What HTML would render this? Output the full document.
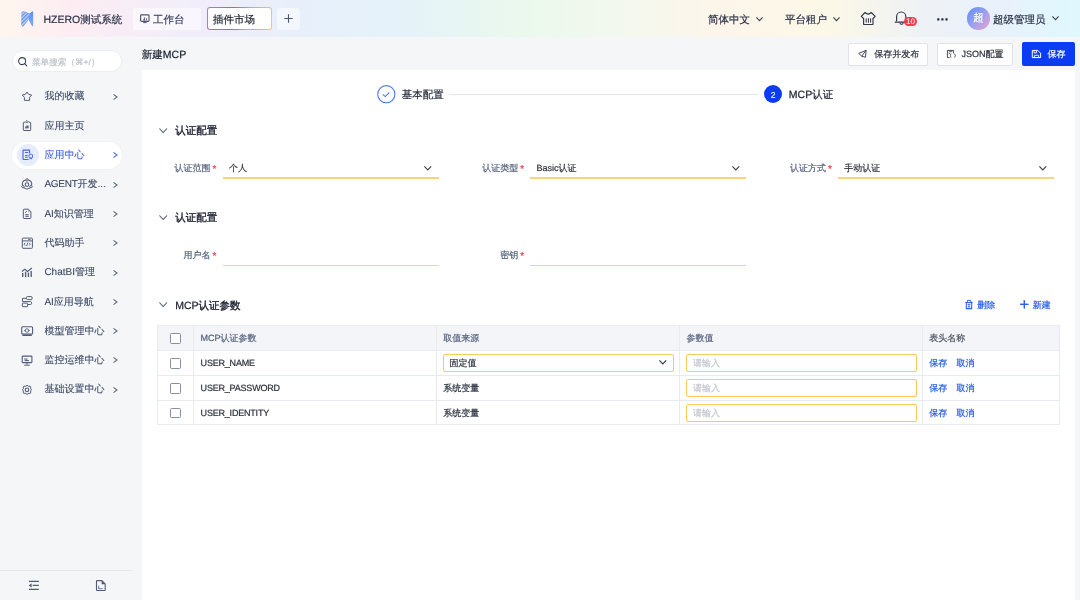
<!DOCTYPE html>
<html><head><meta charset="utf-8">
<style>
*{box-sizing:border-box;margin:0;padding:0}
html,body{width:1080px;height:600px;overflow:hidden}
body{text-rendering:geometricPrecision;-webkit-text-stroke:0.2px currentColor;position:relative;background:#f5f6f8;font-family:"Liberation Sans",sans-serif;color:#1f2533}
.a{position:absolute;white-space:nowrap}
svg.i{position:absolute;overflow:visible}
#hdr{left:0;top:0;width:1080px;height:37px;background:linear-gradient(90deg,#fff6ee 0px,#fdedf3 70px,#f1eefa 190px,#e7effb 300px,#e5f3f9 410px,#ebf9ec 530px,#f3f8ee 620px,#fdf5ea 720px,#fcf8e7 830px,#eff2f5 920px,#e8f1fc 1000px,#dff8fe 1080px)}
.h{font-size:10.5px;line-height:20px;color:#2a3247}
.menu{left:44.4px;font-size:10px;line-height:20px;color:#46506d;-webkit-text-stroke:0.1px currentColor}
.lbl{font-size:9px;line-height:20px;color:#56627e;text-align:right}
.req{color:#f0414f}
.inp{height:1.5px;background:#fdd27e}
.val{font-size:9px;line-height:20px;color:#2a303c}
.sec{font-size:10.5px;line-height:20px;color:#1d2230;font-weight:500;-webkit-text-stroke:0.35px currentColor}
.th{font-size:9px;line-height:20px;color:#56627e}
.td{font-size:9px;line-height:20px;color:#2a303c}
.link{font-size:9px;line-height:20px;color:#2257ee}
.cb{width:10.5px;height:10.5px;border:1px solid #858fa4;border-radius:1.5px;background:#fff}
.box{border:1px solid #fbc95c;border-radius:2px;background:#fff;height:17.8px}
.ph{font-size:9px;line-height:18px;color:#c3c7cf}
.vl{position:absolute;width:1px;background:#e8ebf0}
.hl{position:absolute;height:1px;background:#e8ebf0}
.lat{-webkit-text-stroke:0.25px currentColor}
</style></head><body><div id="wrap" style="position:absolute;left:0;top:0;width:1080px;height:600px;will-change:transform">
<div id="hdr" class="a"></div>
<svg class="i" style="left:0;top:0" width="1" height="1">
<defs><pattern id="strp" patternUnits="userSpaceOnUse" width="2.6" height="2.6" patternTransform="rotate(45)">
<rect width="2.6" height="2.6" fill="#c3d4f6"/><rect width="1.4" height="2.6" fill="#6c95ec"/></pattern>
<linearGradient id="lg1" x1="0" y1="0" x2="0" y2="1"><stop offset="0" stop-color="#5c93f7"/><stop offset="1" stop-color="#7aaaf8"/></linearGradient></defs>
<path d="M21.2 13.2 Q21.5 11.6 23.6 11.1 L29.6 13.2 L28.8 19.6 L23.2 26.8 Q21.4 26.4 21.2 24.8 Z" fill="url(#strp)"/>
<path d="M29.4 13.6 L32.4 11.2 Q33.2 11.2 33.2 12.2 L33.2 25.4 Q33 26.6 32 26.2 L28.6 19.6 Z" fill="url(#lg1)"/>
</svg>
<div class="a h" style="left:43.5px;top:9.50px">HZERO测试系统</div>
<div class="a" style="left:133px;top:7.5px;width:68px;height:22.5px;border-radius:3px;background:rgba(255,255,255,0.55)"></div>
<div class="a h" style="left:153px;top:9.50px;color:#3d4661">工作台</div>
<div class="a" style="left:207px;top:7px;width:65px;height:23px;border-radius:3px;background:linear-gradient(100deg,#e85fd3 0%,#9a6cf6 20%,#5a7ff8 40%,#52d0f5 62%,#f7a98c 82%,#f8c86f 100%)"></div>
<div class="a" style="left:208px;top:8px;width:63px;height:21px;border-radius:2.2px;background:#fff"></div>
<div class="a h" style="left:213px;top:9.50px;color:#1f2430">插件市场</div>
<div class="a" style="left:277px;top:7.5px;width:23px;height:22.5px;border-radius:3px;background:rgba(255,255,255,0.5)"></div>
<svg class="i" style="left:284px;top:14px" width="9" height="9"><path d="M4.5 0.3V8.7M0.3 4.5H8.7" stroke="#4a5572" stroke-width="1.1"/></svg>
<div class="a h" style="left:708px;top:9.50px">简体中文</div>
<svg class="i" style="left:756px;top:16.8px" width="7" height="4"><path d="M0.4 0.4 L3.5 3.6 L6.6 0.4" fill="none" stroke="#3a4255" stroke-width="1.1"/></svg>
<div class="a h" style="left:785px;top:9.50px">平台租户</div>
<svg class="i" style="left:832.5px;top:16.8px" width="7" height="4"><path d="M0.4 0.4 L3.5 3.6 L6.6 0.4" fill="none" stroke="#3a4255" stroke-width="1.1"/></svg>
<div class="a" style="left:904px;top:16.8px;width:13px;height:9.4px;border-radius:5px;background:#f03d4f;color:#fff;font-size:8px;line-height:9.4px;text-align:center;-webkit-text-stroke:0">10</div>
<svg class="i" style="left:936.5px;top:17.5px" width="11" height="3"><rect x="0.2" y="0.3" width="2.2" height="2.2" rx="0.5" fill="#22283a"/><rect x="4.3" y="0.3" width="2.2" height="2.2" rx="0.5" fill="#22283a"/><rect x="8.4" y="0.3" width="2.2" height="2.2" rx="0.5" fill="#22283a"/></svg>
<div class="a" style="left:967.3px;top:7.3px;width:22.6px;height:22.6px;border-radius:50%;background:linear-gradient(135deg,#5a8ff8 0%,#9c9ff0 50%,#eaa3d0 100%);color:#fff;font-size:10.5px;line-height:22.6px;text-align:center;font-weight:500;-webkit-text-stroke:0.15px #fff">超</div>
<div class="a h" style="left:993px;top:9.50px">超级管理员</div>
<svg class="i" style="left:1051.7px;top:16.4px" width="7" height="4"><path d="M0.4 0.4 L3.5 3.6 L6.6 0.4" fill="none" stroke="#3a4255" stroke-width="1.1"/></svg>
<div class="a" style="left:11.7px;top:50.4px;width:110.3px;height:22px;border-radius:11px;background:#fff;border:1px solid #eceef3"></div>
<svg class="i" style="left:17.5px;top:57.3px" width="10" height="10"><circle cx="4.1" cy="4.1" r="3.5" fill="none" stroke="#3a4152" stroke-width="1.05"/><path d="M6.7 6.7 L8.8 8.8" stroke="#3a4152" stroke-width="1.1" stroke-linecap="round"/></svg>
<div class="a" style="left:32px;top:52.20px;font-size:8.6px;line-height:20px;color:#bfc3cc">菜单搜索（⌘+/）</div>
<div class="a" style="left:12px;top:141.5px;width:110.2px;height:27px;border-radius:13.5px;background:#fff;box-shadow:0 0 0 0.6px #eef0f4"></div>
<div class="a" style="left:16.5px;top:143.7px;width:22.6px;height:22.6px;border-radius:50%;background:#e5edfd"></div>
<div class="a menu" style="top:87.45px;color:#3a4663">我的收藏</div>
<svg class="i" style="left:112.8px;top:93.75px" width="4.5" height="6"><path d="M0.5 0.4 L4 3 L0.5 5.6" fill="none" stroke="#5a6580" stroke-width="1.05"/></svg>
<div class="a menu" style="top:116.75px;color:#3a4663">应用主页</div>
<div class="a menu" style="top:146.05px;color:#3d59e8">应用中心</div>
<svg class="i" style="left:112.8px;top:152.35px" width="4.5" height="6"><path d="M0.5 0.4 L4 3 L0.5 5.6" fill="none" stroke="#4a64ec" stroke-width="1.05"/></svg>
<div class="a menu" style="top:175.35px;color:#3a4663"><span style="letter-spacing:-0.25px">AGENT</span>开发...</div>
<svg class="i" style="left:112.8px;top:181.65px" width="4.5" height="6"><path d="M0.5 0.4 L4 3 L0.5 5.6" fill="none" stroke="#5a6580" stroke-width="1.05"/></svg>
<div class="a menu" style="top:204.65px;color:#3a4663">AI知识管理</div>
<svg class="i" style="left:112.8px;top:210.95px" width="4.5" height="6"><path d="M0.5 0.4 L4 3 L0.5 5.6" fill="none" stroke="#5a6580" stroke-width="1.05"/></svg>
<div class="a menu" style="top:233.95px;color:#3a4663">代码助手</div>
<svg class="i" style="left:112.8px;top:240.25px" width="4.5" height="6"><path d="M0.5 0.4 L4 3 L0.5 5.6" fill="none" stroke="#5a6580" stroke-width="1.05"/></svg>
<div class="a menu" style="top:263.25px;color:#3a4663">ChatBI管理</div>
<svg class="i" style="left:112.8px;top:269.55px" width="4.5" height="6"><path d="M0.5 0.4 L4 3 L0.5 5.6" fill="none" stroke="#5a6580" stroke-width="1.05"/></svg>
<div class="a menu" style="top:292.55px;color:#3a4663">AI应用导航</div>
<svg class="i" style="left:112.8px;top:298.85px" width="4.5" height="6"><path d="M0.5 0.4 L4 3 L0.5 5.6" fill="none" stroke="#5a6580" stroke-width="1.05"/></svg>
<div class="a menu" style="top:321.85px;color:#3a4663">模型管理中心</div>
<svg class="i" style="left:112.8px;top:328.15px" width="4.5" height="6"><path d="M0.5 0.4 L4 3 L0.5 5.6" fill="none" stroke="#5a6580" stroke-width="1.05"/></svg>
<div class="a menu" style="top:351.15px;color:#3a4663">监控运维中心</div>
<svg class="i" style="left:112.8px;top:357.45px" width="4.5" height="6"><path d="M0.5 0.4 L4 3 L0.5 5.6" fill="none" stroke="#5a6580" stroke-width="1.05"/></svg>
<div class="a menu" style="top:380.45px;color:#3a4663">基础设置中心</div>
<svg class="i" style="left:112.8px;top:386.75px" width="4.5" height="6"><path d="M0.5 0.4 L4 3 L0.5 5.6" fill="none" stroke="#5a6580" stroke-width="1.05"/></svg>
<div class="a" style="left:0;top:570px;width:132px;height:1px;background:#e6e8ed"></div>
<div class="a" style="left:141.8px;top:44.60px;font-size:10.5px;line-height:20px;color:#1d2333;font-weight:500">新建<span class="lat">MCP</span></div>
<div class="a" style="left:848.4px;top:42.5px;width:79.5px;height:23px;border:1px solid #dfe2e8;border-radius:2px;background:#fff"></div>
<div class="a" style="left:874.2px;top:43.70px;font-size:9px;line-height:20px;color:#2a303c">保存并发布</div>
<div class="a" style="left:937px;top:42.5px;width:76px;height:23px;border:1px solid #dfe2e8;border-radius:2px;background:#fff"></div>
<div class="a" style="left:961.6px;top:43.70px;font-size:9px;line-height:20px;color:#2a303c">JSON配置</div>
<div class="a" style="left:1022.2px;top:42.2px;width:52.8px;height:23.4px;border-radius:2px;background:#0b3cf4"></div>
<div class="a" style="left:1047.6px;top:43.70px;font-size:9px;line-height:20px;color:#fff">保存</div>
<div class="a" style="left:141.8px;top:70.2px;width:933px;height:530px;background:#fff"></div>
<svg class="i" style="left:376.7px;top:85.1px" width="19" height="19"><circle cx="9.3" cy="9.2" r="8.6" fill="#fff" stroke="#4c77f6" stroke-width="1.1"/><path d="M5.8 9.4 L8.2 11.6 L12.4 7.4" fill="none" stroke="#4c77f6" stroke-width="1.1"/></svg>
<div class="a" style="left:401.8px;top:85.00px;font-size:10.5px;line-height:20px;color:#252b38">基本配置</div>
<div class="a" style="left:449px;top:94.2px;width:309px;height:1px;background:#e4e6eb"></div>
<div class="a" style="left:763.8px;top:85px;width:18.4px;height:18.4px;border-radius:50%;background:#0b3cf4"></div>
<div class="a" style="left:763.8px;top:85.5px;width:18.4px;color:#fff;font-size:8.5px;line-height:18.4px;text-align:center;-webkit-text-stroke:0.15px #fff">2</div>
<div class="a" style="left:788.8px;top:85.00px;font-size:10.5px;line-height:20px;color:#1d2230;font-weight:500"><span class="lat">MCP</span>认证</div>
<svg class="i" style="left:158.8px;top:127.95px" width="8.4" height="5"><path d="M0.4 0.5 L4.2 4.5 L8 0.5" fill="none" stroke="#4d5877" stroke-width="1.05"/></svg>
<div class="a sec" style="left:175.2px;top:121.35px">认证配置</div>
<svg class="i" style="left:158.8px;top:214.70px" width="8.4" height="5"><path d="M0.4 0.5 L4.2 4.5 L8 0.5" fill="none" stroke="#4d5877" stroke-width="1.05"/></svg>
<div class="a sec" style="left:175.2px;top:208.10px">认证配置</div>
<svg class="i" style="left:158.8px;top:302.20px" width="8.4" height="5"><path d="M0.4 0.5 L4.2 4.5 L8 0.5" fill="none" stroke="#4d5877" stroke-width="1.05"/></svg>
<div class="a sec" style="left:175.2px;top:295.60px"><span class="lat">MCP</span>认证参数</div>
<div class="a lbl" style="left:136.5px;width:80px;top:157.55px">认证范围<span class="req" style="font-size:10px;margin-left:2px;position:relative;top:1px">*</span></div>
<div class="a inp" style="left:222.8px;top:177.2px;width:216px"></div>
<div class="a val" style="left:229.0px;top:157.55px">个人</div>
<svg class="i" style="left:424.0px;top:165.7px" width="7.6" height="4.4"><path d="M0.4 0.4 L3.8 4.0 L7.199999999999999 0.4" fill="none" stroke="#3a4050" stroke-width="1.1"/></svg>
<div class="a lbl" style="left:444.1px;width:80px;top:157.55px">认证类型<span class="req" style="font-size:10px;margin-left:2px;position:relative;top:1px">*</span></div>
<div class="a inp" style="left:530.4px;top:177.2px;width:216px"></div>
<div class="a val" style="left:536.6px;top:157.55px">Basic认证</div>
<svg class="i" style="left:731.5999999999999px;top:165.7px" width="7.6" height="4.4"><path d="M0.4 0.4 L3.8 4.0 L7.199999999999999 0.4" fill="none" stroke="#3a4050" stroke-width="1.1"/></svg>
<div class="a lbl" style="left:751.8px;width:80px;top:157.55px">认证方式<span class="req" style="font-size:10px;margin-left:2px;position:relative;top:1px">*</span></div>
<div class="a inp" style="left:838.1px;top:177.2px;width:216px"></div>
<div class="a val" style="left:844.3px;top:157.55px">手动认证</div>
<svg class="i" style="left:1039.3px;top:165.7px" width="7.6" height="4.4"><path d="M0.4 0.4 L3.8 4.0 L7.199999999999999 0.4" fill="none" stroke="#3a4050" stroke-width="1.1"/></svg>
<div class="a lbl" style="left:136.5px;width:80px;top:244.70px">用户名<span class="req" style="font-size:10px;margin-left:2px;position:relative;top:1px">*</span></div>
<div class="a inp" style="left:222.8px;top:264.5px;width:216px"></div>
<div class="a lbl" style="left:444.1px;width:80px;top:244.70px">密钥<span class="req" style="font-size:10px;margin-left:2px;position:relative;top:1px">*</span></div>
<div class="a inp" style="left:530.4px;top:264.5px;width:216px"></div>
<div class="a link" style="left:977.3px;top:295.20px">删除</div>
<svg class="i" style="left:1020.2px;top:300.4px" width="8.2" height="8.2"><path d="M4.1 0V8.2M0 4.1H8.2" stroke="#2257ee" stroke-width="1"/></svg>
<div class="a link" style="left:1032.8px;top:295.20px">新建</div>
<div class="a" style="left:157.2px;top:325.0px;width:902.8px;height:25.0px;background:#f3f5f8"></div>
<div class="a" style="left:157.2px;top:325.0px;width:902.8px;height:100.0px;border:1px solid #e9ecf0"></div>
<div class="hl" style="left:157.2px;top:350.0px;width:902.8px"></div>
<div class="hl" style="left:157.2px;top:375.0px;width:902.8px"></div>
<div class="hl" style="left:157.2px;top:400.0px;width:902.8px"></div>
<div class="vl" style="left:193.3px;top:325.0px;height:99.0px"></div>
<div class="vl" style="left:436.2px;top:325.0px;height:99.0px"></div>
<div class="vl" style="left:679.2px;top:325.0px;height:99.0px"></div>
<div class="vl" style="left:922.4px;top:325.0px;height:99.0px"></div>
<div class="a cb" style="left:170.2px;top:333.20px"></div>
<div class="a th" style="left:200.6px;top:328.20px">MCP认证参数</div>
<div class="a th" style="left:443.2px;top:328.20px">取值来源</div>
<div class="a th" style="left:686.6px;top:328.20px">参数值</div>
<div class="a th" style="left:929.3px;top:328.20px;color:#4e5563">表头名称</div>
<div class="a cb" style="left:170.2px;top:358.20px"></div>
<div class="a td" style="left:200.6px;top:353.20px;letter-spacing:-0.2px">USER_NAME</div>
<div class="a box" style="left:443px;top:354.10px;width:231px"></div>
<div class="a td" style="left:449.6px;top:353.20px">固定值</div>
<svg class="i" style="left:659.4px;top:360.1px" width="7.6" height="4.4"><path d="M0.4 0.4 L3.8 4.0 L7.199999999999999 0.4" fill="none" stroke="#2f3545" stroke-width="1.1"/></svg>
<div class="a box" style="left:686.2px;top:354.10px;width:230.8px"></div>
<div class="a ph" style="left:693px;top:354.20px">请输入</div>
<div class="a link" style="left:929.3px;top:353.20px">保存</div>
<div class="a link" style="left:956.4px;top:353.20px">取消</div>
<div class="a cb" style="left:170.2px;top:383.20px"></div>
<div class="a td" style="left:200.6px;top:378.20px;letter-spacing:-0.2px">USER_PASSWORD</div>
<div class="a td" style="left:443.2px;top:378.20px">系统变量</div>
<div class="a box" style="left:686.2px;top:379.10px;width:230.8px"></div>
<div class="a ph" style="left:693px;top:379.20px">请输入</div>
<div class="a link" style="left:929.3px;top:378.20px">保存</div>
<div class="a link" style="left:956.4px;top:378.20px">取消</div>
<div class="a cb" style="left:170.2px;top:407.70px"></div>
<div class="a td" style="left:200.6px;top:402.70px;letter-spacing:-0.2px">USER_IDENTITY</div>
<div class="a td" style="left:443.2px;top:402.70px">系统变量</div>
<div class="a box" style="left:686.2px;top:404.10px;width:230.8px"></div>
<div class="a ph" style="left:693px;top:403.70px">请输入</div>
<div class="a link" style="left:929.3px;top:402.70px">保存</div>
<div class="a link" style="left:956.4px;top:402.70px">取消</div>
<svg style="position:absolute;left:0;top:0" width="1080" height="600"><g transform="translate(19 88.0)"><path d="M8 4 L9.6 6.4 L12.7 7.1 L10.6 9.3 L10.6 12.4 L5.4 12.4 L5.4 9.3 L3.3 7.1 L6.4 6.4 Z" fill="none" stroke="#525c78" stroke-width="1.0" stroke-linejoin="round"/></g><g transform="translate(19 118.0)"><path d="M6.3 4.2 H4.9 Q4.3 4.2 4.3 4.8 V11.9 Q4.3 12.5 4.9 12.5 H11.1 Q11.7 12.5 11.7 11.9 V4.8 Q11.7 4.2 11.1 4.2 H9.7 L8 2.5 Z" fill="none" stroke="#525c78" stroke-width="1.0" stroke-linejoin="round"/><ellipse cx="8" cy="4.5" rx="0.9" ry="0.55" fill="#525c78"/><path d="M6.7 10.6 V8.6 M7.9 10.6 V7.6 M9.1 10.2 V7.4" stroke="#525c78" stroke-width="1.1"/></g><g transform="translate(19 147.0)"><path d="M10.6 6.5 V3.6 Q10.6 3.1 10.1 3.1 H4.5 Q4 3.1 4 3.6 V12 Q4 12.5 4.5 12.5 H9.6" fill="none" stroke="#4b63ea" stroke-width="1.15"/><path d="M6 5.5 H9.2 M6 8.4 H8.6 M6 10.3 H8.6" stroke="#4b63ea" stroke-width="1.05"/><rect x="10" y="7.3" width="3.5" height="3.6" rx="0.9" fill="none" stroke="#4b63ea" stroke-width="1"/><path d="M10.6 10.9 L10.6 12.4 L11.75 11.8 L12.9 12.4 V10.9" fill="#4b63ea"/></g><g transform="translate(19 176.0)"><path d="M6.6 4.1 A4.6 4.6 0 0 0 3.4 9.4 M4.8 11.6 A4.6 4.6 0 0 0 11.2 11.6 M12.6 9.4 A4.6 4.6 0 0 0 9.4 4.1" fill="none" stroke="#525c78" stroke-width="1.05"/><circle cx="8" cy="8.6" r="1.8" fill="none" stroke="#525c78" stroke-width="1.05"/><circle cx="8" cy="3.9" r="1.2" fill="none" stroke="#525c78" stroke-width="1"/><circle cx="4" cy="10.6" r="1.2" fill="none" stroke="#525c78" stroke-width="1"/><circle cx="12" cy="10.6" r="1.2" fill="none" stroke="#525c78" stroke-width="1"/></g><g transform="translate(19 205.0)"><path d="M4.3 4.9 Q4.3 4.2 5 4.2 H9.4 L11.9 6.8 V12.8 Q11.9 13.5 11.2 13.5 H5 Q4.3 13.5 4.3 12.8 Z" fill="none" stroke="#525c78" stroke-width="1.0" stroke-linejoin="round"/><path d="M6 7.6 Q7 7.3 7.7 6.3 M6.2 9.7 H9.8 M6.2 11.3 H9.8" fill="none" stroke="#525c78" stroke-width="1"/><path d="M9.4 4.3 V6.8 H11.9" fill="none" stroke="#525c78" stroke-width="0.7" opacity="0.6"/></g><g transform="translate(19 235.0)"><rect x="3.3" y="3.1" width="10.1" height="10.2" rx="0.7" fill="none" stroke="#525c78" stroke-width="1.0" stroke-linejoin="round"/><path d="M3.3 5.9 H13.4" stroke="#525c78" stroke-width="1"/><path d="M9.2 4.6 H11.6" stroke="#525c78" stroke-width="0.9"/><path d="M6.1 7.9 L5.1 9.2 L6.1 10.5 M10.3 7.9 L11.3 9.2 L10.3 10.5 M8.9 7.6 L7.6 11" fill="none" stroke="#525c78" stroke-width="0.95"/></g><g transform="translate(19 264.0)"><path d="M3.2 7.2 L5.8 5.2 L8.5 7.5 L12.6 4.3" fill="none" stroke="#525c78" stroke-width="1.1" stroke-linecap="round" stroke-linejoin="round"/><path d="M3.7 8.9 V12.9 M6.6 7.8 V12.9 M9.4 8.4 V12.9 M12.2 7.1 V12.9" stroke="#525c78" stroke-width="1.35"/></g><g transform="translate(19 294.0)"><rect x="7.4" y="2.6" width="5.8" height="3" rx="1.2" fill="none" stroke="#525c78" stroke-width="1"/><path d="M7.4 4.3 H3.5 V7.6 H11.4 Q12.6 7.6 12.6 8.8 V9.3 Q12.6 10.5 11.4 10.5 H8.6" fill="none" stroke="#525c78" stroke-width="1"/><rect x="3.3" y="9.1" width="5.3" height="3.6" rx="0.7" fill="none" stroke="#525c78" stroke-width="1"/></g><g transform="translate(19 323.0)"><rect x="2.7" y="3.7" width="10.9" height="7.4" rx="1" fill="none" stroke="#525c78" stroke-width="1.1"/><path d="M3.4 12.4 H12.8" stroke="#525c78" stroke-width="1.2"/><path d="M8 5.6 L9.6 6.5 V8.5 L8 9.4 L6.4 8.5 V6.5 Z M5.2 7.5 H6.4 M9.6 7.5 H10.8" fill="none" stroke="#525c78" stroke-width="0.9"/></g><g transform="translate(19 352.0)"><rect x="3.2" y="4.1" width="9.7" height="6.5" rx="0.6" fill="none" stroke="#525c78" stroke-width="1.1"/><path d="M8 10.6 V12.6 M5.3 13.2 H10.7" stroke="#525c78" stroke-width="1"/><path d="M6 6.2 V8.6 H10 M7.8 6.3 V8.6" fill="none" stroke="#525c78" stroke-width="1"/></g><g transform="translate(19 381.0)"><path d="M7.1 4.6 H8.9 L9.3 5.3 H11.2 Q11.7 5.3 11.7 5.8 V7.8 L12.5 8.8 L11.7 9.8 V11.8 Q11.7 12.3 11.2 12.3 H9.3 L8.9 13.1 H7.1 L6.7 12.3 H4.8 Q4.3 12.3 4.3 11.8 V9.8 L3.5 8.8 L4.3 7.8 V5.8 Q4.3 5.3 4.8 5.3 H6.7 Z" fill="none" stroke="#525c78" stroke-width="1.0" stroke-linejoin="round"/><circle cx="8" cy="8.8" r="1.8" fill="none" stroke="#525c78" stroke-width="1.1"/></g><path d="M28.9 581.4 H38.8 M32.6 585.4 H38.8 M28.9 589.3 H38.8" stroke="#525c78" stroke-width="1.2"/><path d="M28.6 585.4 L31.6 583.3 V587.5 Z" fill="#525c78"/><path d="M96.5 581.2 Q96.5 580.6 97.1 580.6 H101.8 L105.2 584 V589.9 Q105.2 590.5 104.6 590.5 H97.1 Q96.5 590.5 96.5 589.9 Z" fill="none" stroke="#525c78" stroke-width="1.1"/><path d="M101.6 580.6 V584.2 H105.2 Z" fill="#525c78"/><path d="M98.6 585.8 V588.7 H102.6" fill="none" stroke="#525c78" stroke-width="0.8"/><rect x="140.6" y="14.8" width="8.4" height="6.6" rx="0.8" fill="none" stroke="#4e5873" stroke-width="1.15"/><path d="M143.2 22.6 H146.6" stroke="#4e5873" stroke-width="1"/><path d="M143.8 20.6 V18.8 M144.5 20.6 V17.4 M146.4 20.6 V18.2" stroke="#4e5873" stroke-width="0.9"/><path d="M865 12.5 Q868.2 15.6 871.2 12.5 L875.2 16.3 L873 18.5 V23.9 Q873 24.5 872.4 24.5 H864.2 Q863.6 24.5 863.6 23.9 V18.5 L861.3 16.3 Z" fill="none" stroke="#2f3646" stroke-width="1.15" stroke-linejoin="round"/><path d="M866.2 18.4 V22.6 M868.4 18.2 V22.8 M870.6 18.4 V22.6" stroke="#2f3646" stroke-width="1"/><path d="M896.6 21.2 V16.6 A4.6 4.6 0 0 1 905.8 16.6 V18" fill="none" stroke="#2f3646" stroke-width="1.15"/><path d="M895.1 22.1 H904" stroke="#2f3646" stroke-width="1.15" stroke-linecap="round"/><path d="M899.8 22.6 A1.7 1.7 0 0 0 903.2 22.6" fill="none" stroke="#2f3646" stroke-width="1.05"/><path d="M858.7 53.4 L866.1 50.3 L865.5 57.3 L861.7 56.2 Z M861.7 56.2 L866.1 50.3" fill="none" stroke="#3a404e" stroke-width="0.95" stroke-linejoin="round"/><path d="M953.6 53.4 V50.4 H947.4 V57.6 H949.6" fill="none" stroke="#3a404e" stroke-width="0.95"/><path d="M948.8 51.7 H952.4 M948.8 53.3 H950.2" stroke="#3a404e" stroke-width="0.8"/><path d="M951.3 53.9 Q950.6 53.9 950.6 54.6 V55.3 L950.1 55.6 L950.6 55.9 V56.8 Q950.6 57.5 951.3 57.5 M954.3 53.9 Q955 53.9 955 54.6 V55.3 L955.5 55.6 L955 55.9 V56.8 Q955 57.5 954.3 57.5" fill="none" stroke="#3a404e" stroke-width="0.8"/><path d="M1032.3 50.4 H1037.8 L1040.6 53.2 V57.6 H1032.3 Z" fill="none" stroke="#fff" stroke-width="1"/><path d="M1034 50.4 V52.9 H1036.6 V50.4 M1034.4 57.6 V55.3 H1038.6 V57.6" fill="none" stroke="#fff" stroke-width="0.9"/><path d="M965.2 302.5 H972.7 M967.4 302.5 V300.4 H970.8 V302.5" fill="none" stroke="#2d5ff0" stroke-width="0.95"/><path d="M966.3 302.5 V308.6 H971.7 V302.5" fill="none" stroke="#2d5ff0" stroke-width="1.05"/><path d="M967.6 304.3 H970.4 M969 304.3 V306.9 M967.6 306.9 H970.4" stroke="#2d5ff0" stroke-width="0.9"/><path d="M1024.5 300.4 V308.6 M1020.2 304.5 H1028.5" stroke="#2d5ff0" stroke-width="1"/></svg>
</div></body></html>
